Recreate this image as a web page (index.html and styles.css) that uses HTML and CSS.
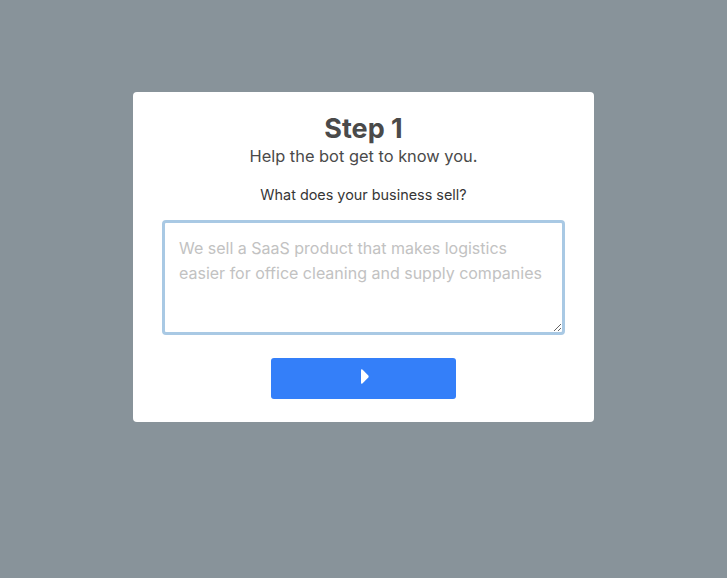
FILE: index.html
```html
<!DOCTYPE html>
<html lang="en">
<head>
<meta charset="utf-8">
<title>Step 1</title>
<link rel="stylesheet" href="styles.css">
</head>
<body>
<main class="overlay">
  <section class="card">
    <h1 class="title">Step 1</h1>
    <p class="subtitle">Help the bot get to know you.</p>
    <label class="question" for="sell">What does your business sell?</label>
    <textarea id="sell" class="answer" placeholder="We sell a SaaS product that makes logistics easier for office cleaning and supply companies"></textarea>
    <button class="next" type="button" aria-label="Next">
      <svg class="caret" width="8" height="15" viewBox="0 0 8 15" aria-hidden="true">
        <path d="M1.4 0.6 L7.3 6.6 Q8 7.5 7.3 8.4 L1.4 14.4 Q0 15.5 0 13.6 L0 1.4 Q0 -0.5 1.4 0.6 Z" fill="#ffffff"/>
      </svg>
    </button>
  </section>
</main>
</body>
</html>
```

FILE: styles.css
```css
* { box-sizing: border-box; }
html, body {
  margin: 0;
  padding: 0;
  height: 100%;
}
body {
  background: #88939a;
  font-family: Inter, "Noto Sans", sans-serif;
  color: #4a4a4a;
}
.overlay {
  display: flex;
  justify-content: center;
  padding-top: 92px;
}
.card {
  width: 461px;
  background: #ffffff;
  border-radius: 4px;
  padding: 21px 29px 23px;
  display: flex;
  flex-direction: column;
  align-items: center;
}
.title {
  margin: 0;
  font-size: 27px;
  line-height: 31px;
  font-weight: 700;
  color: #4a4a4a;
}
.subtitle {
  margin: 0;
  font-size: 16.4px;
  line-height: 24px;
  color: #4a4a4a;
}
.question {
  margin-top: 17px;
  font-size: 14.4px;
  line-height: 20px;
  color: #363636;
}
.answer {
  display: block;
  margin-top: 15px;
  width: 403px;
  height: 115px;
  border: 3px solid #a9c9e4;
  border-radius: 4px;
  padding: 13px 14px;
  font-family: Inter, "Noto Sans", sans-serif;
  font-size: 16px;
  line-height: 25px;
  color: #4a4a4a;
  resize: vertical;
  outline: none;
}
.answer::placeholder {
  color: #c2c2c2;
}
.next {
  margin-top: 23px;
  width: 185px;
  height: 41px;
  border: none;
  border-radius: 3px;
  background: #347ff9;
  display: flex;
  align-items: center;
  justify-content: center;
  padding: 0 0 4px 2px;
  cursor: pointer;
}
.caret { display: block; }
```
